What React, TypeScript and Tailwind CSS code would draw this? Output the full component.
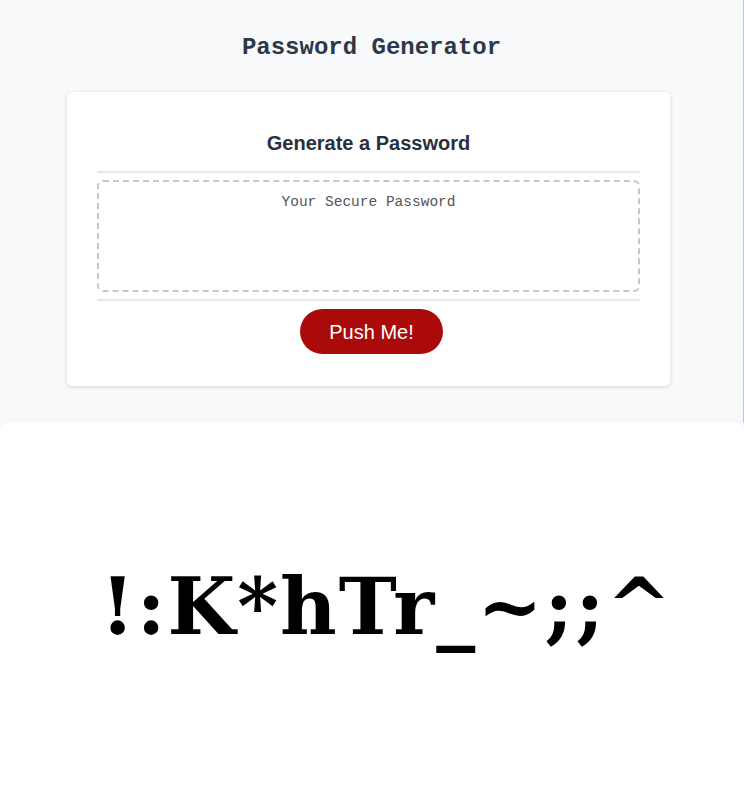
import { useState } from "react";

export default function App() {
  const [password] = useState("!:K*hTr_~;;^");

  return (
    <div className="w-[744px] h-[812px] bg-[#f7f9fb] flex flex-col overflow-hidden">
      <div className="h-[423px] border-r border-[#c3c6cc] pt-[35px]">
        <h1
          className="text-center text-[24px] leading-[26px] font-bold text-[#2d3846]"
          style={{ fontFamily: '"Liberation Mono", monospace' }}
        >
          Password Generator
        </h1>

        <div className="ml-[67px] mt-[31px] w-[603px] bg-white rounded-[5px] shadow-[0_1px_4px_rgba(0,0,0,0.15)] px-[30px] pt-[39px] pb-[32px]">
          <h2
            className="text-center text-[20px] leading-[24px] font-bold text-[#263140]"
            style={{ fontFamily: '"Liberation Sans", Arial, sans-serif' }}
          >
            Generate a Password
          </h2>
          <div className="mt-[16px] h-[2px] bg-[#e6e8eb]" />
          <div className="mt-[7px] h-[112px] border-2 border-dashed border-[#c4c8ce] rounded-md pt-[11px]">
            <p
              className="text-center text-[14.5px] leading-[18px] text-[#555]"
              style={{ fontFamily: '"Liberation Mono", monospace' }}
            >
              Your Secure Password
            </p>
          </div>
          <div className="mt-[7px] h-[2px] bg-[#e6e8eb]" />
          <div className="flex justify-center mt-[8px]">
            <button
              className="ml-[6px] w-[143px] h-[45px] rounded-full bg-[#ab0a0a] text-white text-[20px]"
              style={{ fontFamily: '"Liberation Sans", Arial, sans-serif' }}
            >
              Push Me!
            </button>
          </div>
        </div>
      </div>

      <div className="flex-1 bg-white rounded-t-lg flex items-center justify-center pb-[22px] pl-[30px]">
        <div
          className="text-[78px] font-bold text-black tracking-[2px]"
          style={{ fontFamily: '"DejaVu Serif", serif' }}
        >
          {password}
        </div>
      </div>
    </div>
  );
}
